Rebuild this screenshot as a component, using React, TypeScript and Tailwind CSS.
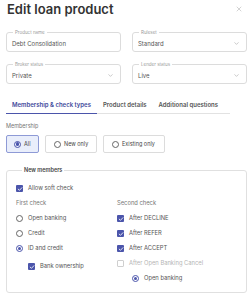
import { ChevronDown, X } from 'lucide-react';

const indigo = 'bg-[#4b55ab]';

function Checkbox({ checked = false, disabled = false }: { checked?: boolean; disabled?: boolean }) {
  if (!checked) {
    return <span className={`block h-[7px] w-[7px] rounded-[1px] border ${disabled ? 'border-[#cfcfcf]' : 'border-[#777]'}`} />;
  }
  return (
    <span className={`flex h-[7px] w-[7px] items-center justify-center rounded-[1px] ${indigo}`}>
      <svg viewBox="0 0 10 10" className="h-[6px] w-[6px]">
        <path d="M2 5.2 4.1 7.2 8.2 2.8" fill="none" stroke="white" strokeWidth="1.4" strokeLinecap="round" strokeLinejoin="round" />
      </svg>
    </span>
  );
}

function Radio({ checked = false }: { checked?: boolean }) {
  return (
    <span
      className={`flex h-[7px] w-[7px] items-center justify-center rounded-full border ${checked ? 'border-[#4b55ab]' : 'border-[#666]'}`}
    >
      {checked && <span className={`block h-[3.5px] w-[3.5px] rounded-full ${indigo}`} />}
    </span>
  );
}

function Field({ label, value, select = false }: { label: string; value: string; select?: boolean }) {
  return (
    <fieldset className="rounded-[3px] border border-[#dcdcdc] px-[5px]">
      <legend className="ml-[1px] px-[2px] text-[4.5px] leading-[5px] text-[#9a9a9a]">{label}</legend>
      <div className="flex h-[16px] items-center justify-between pt-[1px] text-[6px] text-[#555]">
        <span>{value}</span>
        {select && <ChevronDown size={7} strokeWidth={1.5} className="mr-[1px] text-[#888]" />}
      </div>
    </fieldset>
  );
}

function Row({ children, className = '' }: { children: React.ReactNode; className?: string }) {
  return <div className={`flex h-[15px] items-center gap-[4px] ${className}`}>{children}</div>;
}

export default function App() {
  const tabs = ['Membership & check types', 'Product details', 'Additional questions'];

  return (
    <div className="h-[300px] w-[252px] overflow-hidden bg-white font-['Inter',sans-serif] text-[#555]">
      <div className="flex h-[17px] items-center justify-between pl-[7px] pr-[9px]">
        <h1 className="text-[13px] font-semibold leading-[14px] text-[#333]">Edit loan product</h1>
        <X size={8} strokeWidth={1.3} className="text-[#999]" />
      </div>

      <div className="mt-[13px] grid grid-cols-2 gap-x-[11px] gap-y-[10px] pl-[6px] pr-[5px]">
        <Field label="Product name" value="Debt Consolidation" />
        <Field label="Ruleset" value="Standard" select />
        <Field label="Broker status" value="Private" select />
        <Field label="Lender status" value="Live" select />
      </div>

      <div className="ml-[6px] mr-[22px] mt-[14px] flex border-b border-[#e2e2e2]">
        {tabs.map((tab, i) => (
          <div
            key={tab}
            className={`-mb-px px-[6px] pb-[4px] pt-[3px] text-[6px] font-semibold leading-[8px] ${
              i === 0 ? 'border-b-[1.5px] border-[#4b55ab] text-[#3f4a9c]' : 'border-b-[1.5px] border-transparent text-[#555]'
            }`}
          >
            {tab}
          </div>
        ))}
      </div>

      <div className="ml-[6px] mt-[9px] text-[5.5px] leading-[7px] text-[#777]">Membership</div>

      <div className="ml-[6px] mt-[5px] flex gap-[6px]">
        <div className="flex h-[18px] w-[33px] items-center gap-[3px] rounded-[2px] border border-[#8e9ad6] bg-[#e9eefb] pl-[7px] text-[5.5px] text-[#444]">
          <Radio checked />
          All
        </div>
        <div className="flex h-[18px] w-[52px] items-center gap-[3px] rounded-[2px] border border-[#dcdcdc] pl-[8px] text-[5.5px] text-[#444]">
          <Radio />
          New only
        </div>
        <div className="flex h-[18px] w-[62px] items-center gap-[3px] rounded-[2px] border border-[#dcdcdc] pl-[8px] text-[5.5px] text-[#444]">
          <Radio />
          Existing only
        </div>
      </div>

      <fieldset className="ml-[6px] mr-[5px] mt-[14px] rounded-[3px] border border-[#e0e0e0] pb-[6px] pl-[9px] pt-[7px]">
        <legend className="ml-[6px] px-[2px] text-[5.5px] font-semibold leading-[7px] text-[#444]">New members</legend>

        <Row className="text-[5.8px]">
          <Checkbox checked />
          <span className="ml-[1px]">Allow soft check</span>
        </Row>

        <div className="grid grid-cols-[101px_1fr] text-[5.8px]">
          <div>
            <Row className="text-[#777]">First check</Row>
            <Row>
              <Radio />
              <span className="ml-[1px]">Open banking</span>
            </Row>
            <Row>
              <Radio />
              <span className="ml-[1px]">Credit</span>
            </Row>
            <Row>
              <Radio checked />
              <span className="ml-[1px]">ID and credit</span>
            </Row>
            <Row className="mt-[3px] pl-[12px]">
              <Checkbox checked />
              <span className="ml-[1px]">Bank ownership</span>
            </Row>
          </div>
          <div>
            <Row className="text-[#777]">Second check</Row>
            <Row>
              <Checkbox checked />
              <span className="ml-[1px]">After DECLINE</span>
            </Row>
            <Row>
              <Checkbox checked />
              <span className="ml-[1px]">After REFER</span>
            </Row>
            <Row>
              <Checkbox checked />
              <span className="ml-[1px]">After ACCEPT</span>
            </Row>
            <Row className="text-[#b5b5b5]">
              <Checkbox disabled />
              <span className="ml-[1px]">After Open Banking Cancel</span>
            </Row>
            <Row className="pl-[15px]">
              <Radio checked />
              <span className="ml-[1px]">Open banking</span>
            </Row>
          </div>
        </div>
      </fieldset>
    </div>
  );
}
